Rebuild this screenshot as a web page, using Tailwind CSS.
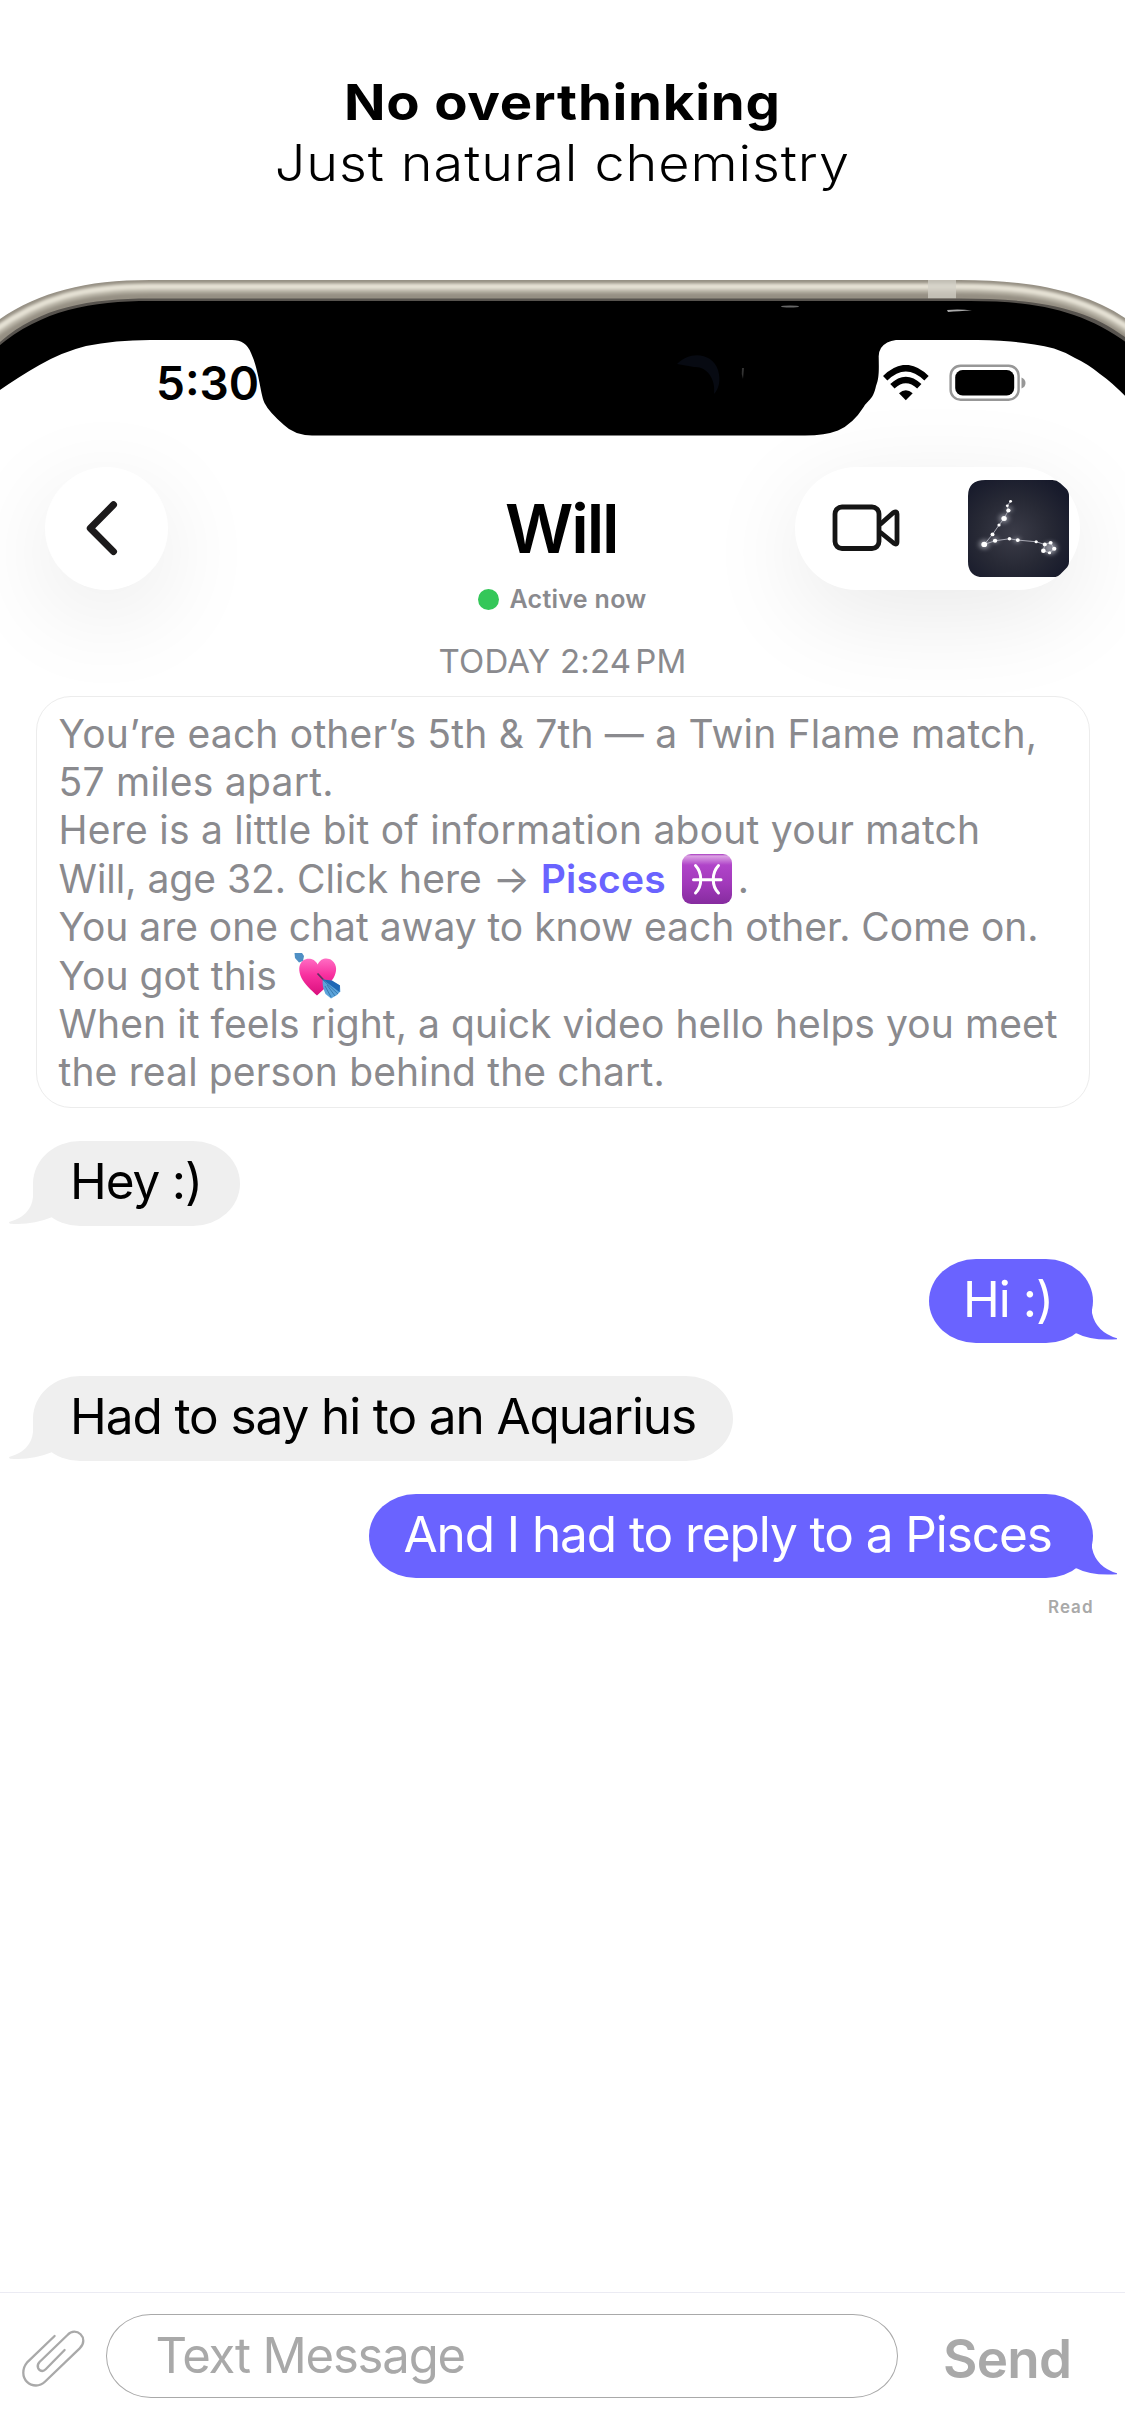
<!DOCTYPE html>
<html lang="en">
<head>
<meta charset="utf-8">
<title>Chat with Will</title>
<script src="https://cdn.jsdelivr.net/npm/@tailwindcss/browser@4"></script>
</head>
<body class="bg-white">
<div class="relative flex h-[2435px] w-[1125px] flex-col overflow-hidden bg-white font-['Inter',sans-serif] text-black">

  <!-- phone frame -->
  <svg class="pointer-events-none absolute top-[270px] left-0" width="1125" height="180" viewBox="0 270 1125 180" aria-hidden="true">
    <defs>
      <filter id="soft" x="-5%" y="-50%" width="110%" height="200%"><feGaussianBlur stdDeviation="1.6"/></filter>
      <filter id="edge" x="-2%" y="-5%" width="104%" height="110%"><feGaussianBlur stdDeviation="0.7"/></filter>
    </defs>
    <path d="M0 319C40 292 85 280 150 280H960C1030 280 1085 291 1125 318V345C1085 310 1035 303 960 303H150C90 303 40 312 0 350Z" fill="#958f83"/>
    <g fill="none" filter="url(#soft)">
      <path d="M-8 334C40 299 85 288 150 288H960C1030 288 1085 298 1133 333" stroke="#b7b2a5" stroke-width="10"/>
      <path d="M-8 332C40 297 85 286.500 150 286.500H960C1030 286.500 1085 296 1133 331" stroke="#e6e2d5" stroke-width="5.500"/>
    </g>
    <rect x="928" y="280" width="28" height="18.500" fill="#d2cfc6" opacity=".75"/>
    <path d="M0 342C40 307 90 298.500 150 298.500H960C1035 298.500 1085 307 1125 337V345C1085 312 1035 303 970 303H150C90 303 40 312 0 350Z" fill="#57534e"/>
    <path filter="url(#edge)" d="M-6 350C40 310 90 301 150 301H970C1035 301 1085 310 1131 346V402Q1113 383 1100 374Q1088 364 1075 358Q1065 352 1054 348.500Q1022 340.500 978 340H896Q886 341 881 348Q878.500 352 878.700 357C879 372 879 378 876 386C873 400 868 400 864 406.500Q853 424 838 430.500Q825 435.500 805 435.500H312Q294 435 284 425Q269 412 264.500 403C260 392 259 370 251 353Q246 340 232 340H150Q115 340 86 346Q62 352 39.500 365Q20 376 -6 394Z" fill="#000"/>
    <ellipse cx="790" cy="306.500" rx="9" ry="1" fill="#666" filter="url(#edge)"/>
    <path d="M947 310Q960 309 972 310.500Q958 311 948 312Z" fill="#aaa"/>
    <path d="M677 364C690 350 713 353 718 370C721 380 719 389 714 394C716 378 706 366 694 367Z" fill="#070a12"/>
    <path d="M742 368Q741 374 743 379L744 368Z" fill="#333"/>
  </svg>

  <header class="relative flex flex-col items-center pt-[72px] text-[50px] leading-[61px]">
    <h1 class="scale-x-109 font-bold tracking-[.7px]">No overthinking</h1>
    <p class="scale-x-108 font-light tracking-[.85px]">Just natural chemistry</p>
  </header>

  <!-- status bar -->
  <div class="relative mt-[160px] flex h-[58px] items-center">
    <span class="ml-[156px] w-[726px] text-[46px] leading-[58px] font-semibold">5:30</span>
    <svg width="48" height="36" viewBox="0 0 48 36" fill="none" stroke="#000">
      <path d="M3.200 13.200Q23.800 -7 44.500 13.200" stroke-width="6.200"/>
      <path d="M10.400 21.300Q23.800 8.500 37.300 21.300" stroke-width="6.200"/>
      <path d="M17 28.300Q23.800 22.200 30.700 28.300L23.800 35.200Z" fill="#000" stroke="none"/>
    </svg>
    <svg class="ml-[19px]" width="78" height="38" viewBox="0 0 78 38"><rect x="1.600" y="1.700" width="68" height="34" rx="10" fill="none" stroke="#979797" stroke-width="2.400"/><rect x="6.200" y="6" width="59" height="25.500" rx="7.500"/><path d="M72.500 13.500Q76.500 15 76.500 19T72.500 24.500Z" fill="#979797"/></svg>
  </div>

  <!-- chat header -->
  <div class="relative mt-[54.700px] flex h-[123.500px] items-center justify-between pr-[45px] pl-[44.500px]">
    <button class="flex h-[123.500px] w-[123.500px] items-center rounded-full bg-white shadow-[0_24px_100px_rgba(0,0,0,0.09)]">
      <svg class="ml-[39.500px]" width="36" height="64" viewBox="0 0 36 64" fill="none" stroke="#1c1a1b" stroke-width="7" stroke-linecap="round" stroke-linejoin="round"><path d="M29.500 8.800L6.300 32.200L29.500 55.600"/></svg>
    </button>
    <h2 class="absolute left-[505px] text-[67px] leading-none font-semibold tracking-[-2.1px]">Will</h2>
    <div class="flex h-[123.500px] w-[285px] items-center rounded-full bg-white shadow-[0_24px_100px_rgba(0,0,0,0.09)]">
      <svg class="ml-[37px]" width="70" height="48" viewBox="0 0 70 48" fill="none" stroke="#151515" stroke-width="4.800" stroke-linejoin="round"><rect x="3" y="3" width="44" height="41.500" rx="7"/><path d="M48 20.500L61.500 8.500Q65 6.500 65 10V38Q65 41.500 61.500 39L48 28"/></svg>
      <svg class="ml-[66px]" width="101" height="97.500" viewBox="1132 118 280 292" preserveAspectRatio="none">
        <defs>
          <radialGradient id="sky" cx=".45" cy=".55" r=".65"><stop offset="0" stop-color="#3b3c48"/><stop offset=".55" stop-color="#272935"/><stop offset="1" stop-color="#171a2b"/></radialGradient>
          <filter id="glow" x="-30%" y="-30%" width="160%" height="160%"><feGaussianBlur stdDeviation="7"/></filter>
        </defs>
        <path d="M1180 118H1366Q1378 118 1388 128L1403 143Q1412 152 1412 166V362Q1412 375 1403 384L1388 400Q1378 410 1366 410H1180Q1132 410 1132 362V166Q1132 118 1180 118Z" fill="url(#sky)"/>
        <g fill="#cfd0da" opacity=".6" filter="url(#glow)"><circle cx="1232" cy="233" r="13"/><circle cx="1177" cy="311" r="14"/><circle cx="1246" cy="205" r="8"/><circle cx="1207" cy="298" r="9"/><circle cx="1360" cy="322" r="19"/><circle cx="1268" cy="298" r="8"/></g>
        <path d="M1250 182L1241 195L1244 209L1232 233L1218 253L1200 281L1177 311L1207 300L1247 294L1270 298L1321 303L1345 311L1361 306L1371 324L1358 336L1341 330L1345 311" fill="none" stroke="#b9bac4" stroke-width="2.500"/>
        <g fill="#fff"><circle cx="1250" cy="182" r="4"/><circle cx="1241" cy="195" r="4"/><circle cx="1244" cy="209" r="6"/><circle cx="1232" cy="233" r="7.500"/><circle cx="1218" cy="253" r="4.500"/><circle cx="1200" cy="281" r="5.500"/><circle cx="1177" cy="311" r="8"/><circle cx="1207" cy="300" r="6"/><circle cx="1247" cy="294" r="5"/><circle cx="1270" cy="298" r="5.500"/><circle cx="1321" cy="303" r="4.500"/><circle cx="1345" cy="311" r="5.500"/><circle cx="1361" cy="306" r="5.500"/><circle cx="1371" cy="324" r="6"/><circle cx="1358" cy="336" r="4.500"/><circle cx="1341" cy="330" r="6.500"/></g>
      </svg>
    </div>
  </div>

  <div class="relative -mt-[6px] flex h-[30px] items-center justify-center gap-[10px] text-[25px] leading-[30px] font-semibold tracking-[.3px] text-[#8a8a8e]">
    <span class="h-[21px] w-[21px] rounded-full bg-[#34c759]"></span>Active now
  </div>
  <div class="relative mt-[27px] h-[40px] text-center text-[33px] leading-[40px] tracking-[.2px] text-[#8a8a8e]">TODAY 2:24<span class="pl-[4px]">PM</span></div>

  <!-- match card -->
  <section class="relative mt-[14.800px] ml-[35.500px] h-[412px] w-[1054.500px] rounded-[35px] border-[1.500px] border-[#ececec] bg-white pt-[12.700px] pl-[22px] text-[39px] leading-[48.400px] whitespace-nowrap text-[#8a8a8e]">
    <p class="tracking-[.2px]">You’re each other’s 5th &amp; 7th — a Twin Flame match,</p>
    <p class="tracking-[.25px]">57 miles apart.</p>
    <p class="tracking-[.25px]">Here is a little bit of information about your match</p>
    <p class="flex h-[48.400px] items-center">Will, age 32. Click here<span class="w-[48px] pl-[11px]">→</span><a class="w-[152px] pl-[11px] font-semibold tracking-[.2px] text-[#6a63ff]">Pisces</a>
      <svg class="-mt-[1px]" width="50" height="50" viewBox="0 0 50 50"><defs><linearGradient id="pz" x1="0" y1="0" x2="0" y2="1"><stop offset="0" stop-color="#a636be"/><stop offset=".04" stop-color="#dca4e4"/><stop offset=".22" stop-color="#b044c9"/><stop offset=".6" stop-color="#a139ba"/><stop offset="1" stop-color="#862c9f"/></linearGradient></defs><rect width="50" height="50" rx="9" fill="url(#pz)"/><path d="M13.500 11.500C20.500 19 20.500 32 13.500 39M36.500 11.500C29.500 19 29.500 32 36.500 39M11.500 25.700H39" fill="none" stroke="#fff" stroke-width="3" stroke-linecap="round"/></svg><span class="pl-[6px]">.</span></p>
    <p class="tracking-[-.03px]">You are one chat away to know each other. Come on.</p>
    <p class="flex h-[48.400px] items-center tracking-[.05px]">You got this
      <svg class="-mt-[1px] ml-[17px]" width="47" height="47" viewBox="0 0 47 47"><defs><linearGradient id="ht" x1="0" y1="0" x2="0" y2="1"><stop offset="0" stop-color="#ff6dc3"/><stop offset=".45" stop-color="#f8309f"/><stop offset="1" stop-color="#d90f7c"/></linearGradient></defs>
        <path d="M0.500 1L8 1L10 4L9 9L5 10.500L1 6Z" fill="#4f8fc4"/>
        <path d="M23.700 12.500C27 5.500 34 5.500 38 8.500C43.500 13 43 20 39.500 26C35.500 32.500 29 38 23 43.500C17 38 10.500 32 7.500 26C4.500 19 4 13 9 8.500C13.500 5.500 20.500 6 23.700 12.500Z" fill="url(#ht)"/>
        <path d="M23.500 21.500L32 30.500" stroke="#5d3460" stroke-width="1.800"/>
        <path d="M28.700 27.500L38 29L46 33.500L46.300 39.500L43 43L37 46.500L31.500 42Q28 35 28.700 27.500Z" fill="#5ba3da"/>
        <path d="M28.700 27.500L38 28.500L46 33.500L45.500 40Z" fill="#1f68b5"/>
        <path d="M29 28L44 42M31 34L37 45M33 33L41 44" stroke="#2f6ea5" stroke-width=".8"/></svg></p>
    <p class="tracking-[.08px]">When it feels right, a quick video hello helps you meet</p>
    <p class="tracking-[.15px]">the real person behind the chart.</p>
  </section>

  <!-- messages -->
  <main class="relative text-[49.500px] whitespace-nowrap">
    <div class="relative mt-[33px] ml-[32.500px] flex h-[85px] w-[207.500px] items-center rounded-[47px/42.500px] bg-[#efefef] pb-[4px] pl-[37.500px] tracking-[-1.14px]">
      <svg class="absolute top-[42px] -left-[24px]" width="48" height="42" viewBox="0 0 48 42"><path d="M24 0V14Q22 33 0 39Q0 41 2 40.700Q24 42 42 34.500L48 30V0Z" fill="#efefef"/></svg>
      <span class="relative">Hey :)</span>
    </div>
    <div class="relative mt-[33px] ml-[928.500px] flex h-[84px] w-[164px] items-center rounded-[47px/42px] bg-[#6a63ff] pb-[4px] pl-[34.500px] tracking-[-1px] text-white">
      <svg class="absolute top-[41px] -right-[24px]" width="50" height="42" viewBox="0 0 50 42"><path d="M25 0V13Q29 32 50 38.300V39.300Q24 41 10 33.500Q8 32.500 6 33.500L0 30V0Z" fill="#6a63ff"/></svg>
      <span class="relative">Hi :)</span>
    </div>
    <div class="relative mt-[33px] ml-[32.500px] flex h-[85px] w-[700.500px] items-center rounded-[47px/42.500px] bg-[#efefef] pb-[4px] pl-[37.500px] tracking-[-1.1px]">
      <svg class="absolute top-[42px] -left-[24px]" width="48" height="42" viewBox="0 0 48 42"><path d="M24 0V14Q22 33 0 39Q0 41 2 40.700Q24 42 42 34.500L48 30V0Z" fill="#efefef"/></svg>
      <span class="relative">Had to say hi to an Aquarius</span>
    </div>
    <div class="relative mt-[33px] ml-[368.500px] flex h-[84px] w-[724px] items-center rounded-[47px/42px] bg-[#6a63ff] pb-[4px] pl-[35px] tracking-[-1.07px] text-white">
      <svg class="absolute top-[41px] -right-[24px]" width="50" height="42" viewBox="0 0 50 42"><path d="M25 0V13Q29 32 50 38.300V39.300Q24 41 10 33.500Q8 32.500 6 33.500L0 30V0Z" fill="#6a63ff"/></svg>
      <span class="relative">And I had to reply to a Pisces</span>
    </div>
    <p class="mt-[17.500px] pr-[31.500px] text-right text-[17px] leading-[24px] font-semibold tracking-[1px] text-[#a9a9a9]">Read</p>
  </main>

  <!-- composer -->
  <footer class="relative mt-auto flex h-[143px] items-start border-t border-[#ebebf3] pt-[20.500px] text-[#a9a9a9]">
    <svg class="mt-[14.500px] ml-[20px]" width="66" height="61" viewBox="0 0 66 61" fill="none" stroke="#a9a9a9" stroke-width="2.300" stroke-linecap="round" stroke-linejoin="round"><path d="M34.600 8L6.900 34.700Q3.300 39 3.300 44.700C3.300 52 9 57.500 16 57.500Q21 57.500 24.900 53.700L59.700 20.300Q63.300 17 63.300 12.700C63.300 7.500 59 3.700 54.300 3.700Q50.500 3.700 47.500 7L19.500 34C15.500 38.500 19 43 22.400 43Q24 43 25.700 41.300L44.600 22"/></svg>
    <div class="ml-[20px] flex h-[84px] w-[792px] items-center rounded-[45px/42px] border border-[#a9a9a9] pl-[48.500px] text-[49px] tracking-[-1.17px]">Text Message</div>
    <button class="mt-[13px] ml-[45px] text-[53px] leading-[64px] font-semibold tracking-[-.75px]">Send</button>
  </footer>
</div>
</body>
</html>
